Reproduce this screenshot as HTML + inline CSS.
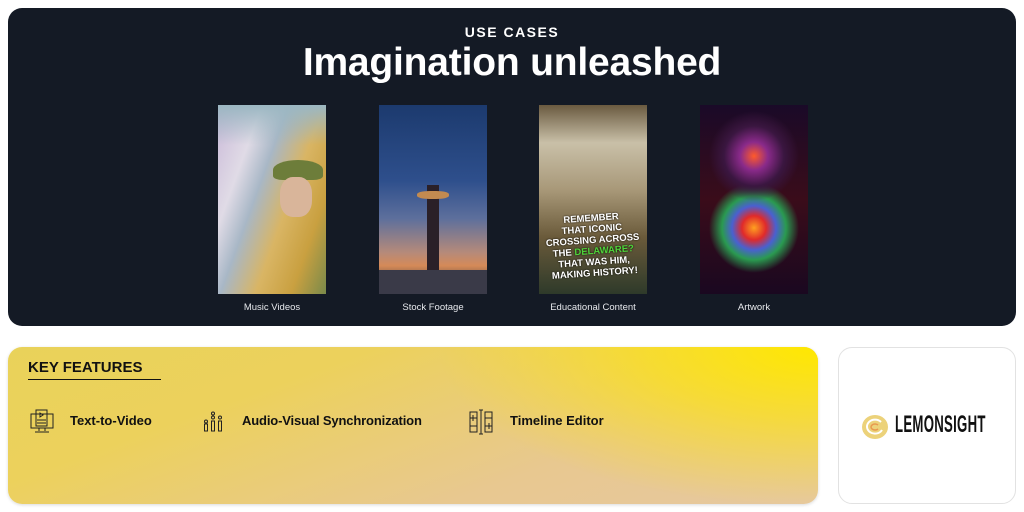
<!DOCTYPE html>
<html><head><meta charset="utf-8"><style>
*{margin:0;padding:0;box-sizing:border-box}
body{width:1024px;height:512px;background:#fff;font-family:"Liberation Sans",sans-serif;position:relative;overflow:hidden}
.dark{position:absolute;left:8px;top:8px;width:1008px;height:318px;background:#141a25;border-radius:14px}
.sub{position:absolute;top:16px;width:100%;text-align:center;color:#fff;font-weight:bold;font-size:14px;letter-spacing:1.5px}
.h{position:absolute;top:33px;width:100%;text-align:center;color:#fff;font-weight:bold;font-size:39px;letter-spacing:-0.2px}
.img{position:absolute;top:97px;width:108px;height:189px;overflow:hidden}
.lab{position:absolute;top:294px;width:160px;text-align:center;color:#e6e8ec;font-size:9.5px}
.yel{position:absolute;left:8px;top:347px;width:810px;height:157px;border-radius:14px;background:linear-gradient(160deg,#e9d25a 0%,#ecd15c 30%,#e8c890 70%,#e6c8a0 100%);overflow:hidden;box-shadow:0 1px 3px rgba(0,0,0,.15)}
.yel:before{content:"";position:absolute;left:0;top:0;right:0;bottom:0;background:radial-gradient(ellipse 380px 160px at 100% 0%,#ffe800 0%,rgba(255,230,0,.6) 45%,rgba(255,230,0,0) 100%)}
.kf{position:absolute;left:20px;top:12px;font-weight:bold;font-size:15px;color:#111;padding-bottom:3px;border-bottom:1.5px solid #111;width:133px}
.ft{position:absolute;top:66px;font-weight:bold;font-size:13px;color:#111}
.logo{position:absolute;left:838px;top:347px;width:178px;height:157px;border:1px solid #e2e2e2;border-radius:14px;background:#fff}
</style></head><body>
<div class="dark">
<div class="sub">USE CASES</div>
<div class="h">Imagination unleashed</div>
<div class="img" style="left:210px;background:linear-gradient(110deg,#c9b8d8 0%,#e0dbe6 25%,#a8b7c6 40%,#d9b564 60%,#c9a040 80%,#7a8a4a 100%)">
<div style="position:absolute;left:55px;top:55px;width:50px;height:20px;background:#6d7d3a;border-radius:50% 50% 20% 20%"></div>
<div style="position:absolute;left:62px;top:72px;width:32px;height:40px;background:#d9b59a;border-radius:40%"></div>
<div style="position:absolute;left:0;top:0;width:108px;height:40px;background:linear-gradient(180deg,#9bb7c2,rgba(155,183,194,0))"></div>
</div>
<div class="img" style="left:371px;background:linear-gradient(180deg,#1c3a6e 0%,#2e4f8c 40%,#5d6f9c 60%,#b58a7a 78%,#d58a58 85%,#1e2430 100%)">
<div style="position:absolute;left:48px;top:80px;width:12px;height:110px;background:#2a2028"></div>
<div style="position:absolute;left:38px;top:86px;width:32px;height:8px;background:#c28a50;border-radius:40%"></div>
<div style="position:absolute;left:0;top:165px;width:108px;height:24px;background:#3a3a48"></div>
</div>
<div class="img" style="left:531px;background:linear-gradient(180deg,#6a5a40 0%,#c9c0a8 20%,#a89878 45%,#6a5a3a 70%,#2e3a2a 100%)">
<div style="position:absolute;left:0;top:108px;width:108px;text-align:center;color:#fff;font-weight:bold;font-size:9.5px;line-height:11px;transform:rotate(-4deg);text-shadow:0 0 2px #000">REMEMBER<br>THAT ICONIC<br>CROSSING ACROSS<br>THE <span style="color:#4fd43a">DELAWARE?</span><br>THAT WAS HIM,<br>MAKING HISTORY!</div>
</div>
<div class="img" style="left:692px;background:radial-gradient(circle at 50% 27%,#ff5a2a 0,#8a2a8a 14px,#3a1640 30px,rgba(0,0,0,0) 45px),radial-gradient(circle at 50% 65%,#ffa020 0,#e02a2a 12px,#4a60d0 22px,#2a9a50 32px,rgba(0,0,0,0) 45px),linear-gradient(180deg,#1a0a28,#3a0c1a 50%,#1a0820)"></div>
<div class="lab" style="left:184px">Music Videos</div>
<div class="lab" style="left:345px">Stock Footage</div>
<div class="lab" style="left:505px">Educational Content</div>
<div class="lab" style="left:666px">Artwork</div>
</div>
<div class="yel">
<div class="kf">KEY FEATURES</div>
<svg style="position:absolute;left:22px;top:62px" width="24" height="26" viewBox="0 0 24 26" fill="none" stroke="#222" stroke-width="1"><rect x="1" y="5" width="22" height="14"/><rect x="6" y="1" width="11" height="16"/><path d="M10 4l3 2-3 2z"/><path d="M7 11h9M7 14h9M9 19v3M15 19v3M5 23h14"/></svg>
<svg style="position:absolute;left:194px;top:64px" width="22" height="22" viewBox="0 0 22 22" fill="none" stroke="#222" stroke-width="1"><circle cx="11" cy="2.5" r="1.5"/><circle cx="11" cy="6.5" r="1.5"/><circle cx="4" cy="10.5" r="1.5"/><circle cx="18" cy="6.5" r="1.5"/><rect x="2.5" y="13" width="3" height="7"/><rect x="9.5" y="10" width="3" height="10"/><rect x="16.5" y="10" width="3" height="10"/></svg>
<svg style="position:absolute;left:460px;top:62px" width="26" height="26" viewBox="0 0 26 26" fill="none" stroke="#222" stroke-width="1"><rect x="2" y="3" width="7" height="20"/><rect x="17" y="3" width="7" height="20"/><path d="M2 9h7M2 17h7M17 9h7M17 17h7M5 6v6M21 14v6M13 1v24M11 1h4M11 25h4"/></svg>
<div class="ft" style="left:62px">Text-to-Video</div>
<div class="ft" style="left:234px;letter-spacing:-0.15px">Audio-Visual Synchronization</div>
<div class="ft" style="left:502px">Timeline Editor</div>
</div>
<div class="logo">
<svg style="position:absolute;left:22px;top:66px" width="28" height="26" viewBox="0 0 28 26"><ellipse cx="14" cy="13" rx="13" ry="12" fill="#ecd27a"/><path d="M20 8a8 7 0 1 0 1 8" fill="none" stroke="#fff" stroke-width="2"/><path d="M17 11a4 3 0 1 0 0 4" fill="none" stroke="#e89a50" stroke-width="1.5"/></svg>
<div style="position:absolute;left:56px;top:63px;font-weight:bold;font-size:24px;color:#111;transform:scaleX(0.55);transform-origin:left;letter-spacing:0.5px">LEMONSIGHT</div>
</div>
</body></html>
